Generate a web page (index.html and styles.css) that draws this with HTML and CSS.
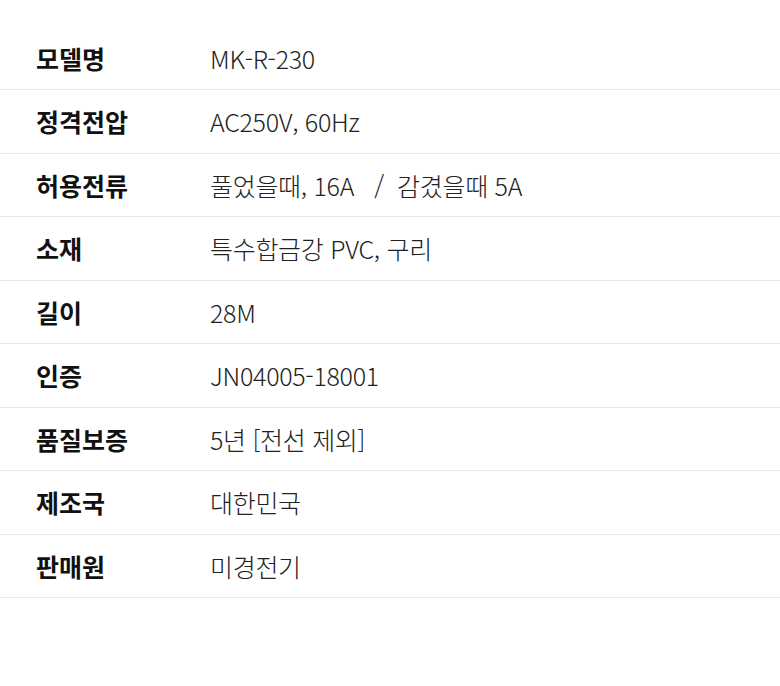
FILE: index.html
```html
<!DOCTYPE html>
<html lang="ko">
<head>
<meta charset="utf-8">
<link rel="stylesheet" href="styles.css">
</head>
<body>
<div class="spec">
  <div class="row"><div class="label">모델명</div><div class="value">MK-R-230</div></div>
  <div class="row"><div class="label">정격전압</div><div class="value">AC250V, 60Hz</div></div>
  <div class="row"><div class="label">허용전류</div><div class="value">풀었을때, 16A &nbsp; / &nbsp;감겼을때 5A</div></div>
  <div class="row"><div class="label">소재</div><div class="value">특수합금강 PVC, 구리</div></div>
  <div class="row"><div class="label">길이</div><div class="value">28M</div></div>
  <div class="row"><div class="label">인증</div><div class="value">JN04005-18001</div></div>
  <div class="row"><div class="label">품질보증</div><div class="value">5년 [전선 제외]</div></div>
  <div class="row"><div class="label">제조국</div><div class="value">대한민국</div></div>
  <div class="row"><div class="label">판매원</div><div class="value">미경전기</div></div>
</div>
</body>
</html>
```
FILE: styles.css
```css
html, body {
  margin: 0;
  padding: 0;
  background: #fff;
}
body {
  font-family: "Noto Sans CJK KR", "Noto Sans", sans-serif;
}
.spec {
  padding-top: 26.5px;
}
.row {
  display: flex;
  align-items: center;
  height: 63.5px;
  box-sizing: border-box;
  border-bottom: 1px solid #e6e6e6;
  padding-left: 36px;
}
.label {
  width: 174px;
  font-size: 25px;
  font-weight: 700;
  color: #111;
  letter-spacing: 0;
}
.value {
  font-size: 25px;
  font-weight: 300;
  color: #222;
  letter-spacing: -0.3px;
}
```
